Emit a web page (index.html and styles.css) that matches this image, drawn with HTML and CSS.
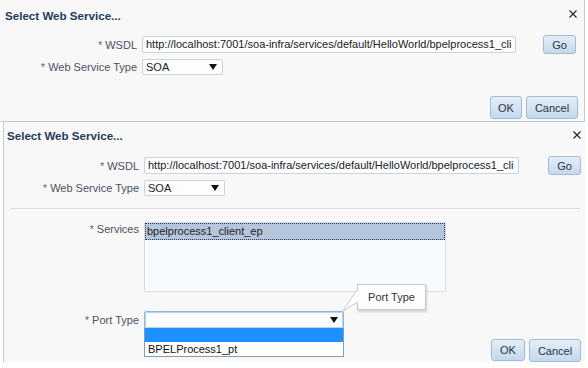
FILE: index.html
```html
<!DOCTYPE html>
<html>
<head>
<meta charset="utf-8">
<link rel="stylesheet" href="styles.css">
</head>
<body>
<div class="shot shot1">
  <div class="head"><span class="title">Select Web Service...</span><svg class="close" width="8" height="8" viewBox="0 0 8 8"><path d="M0.5 0.5L7.5 7.5M7.5 0.5L0.5 7.5" stroke="#222" stroke-width="1.1"/></svg></div>
  <div class="form">
    <div class="lbl"><span class="req">*</span> WSDL</div>
    <div class="input url">http://localhost:7001/soa-infra/services/default/HelloWorld/bpelprocess1_cli</div>
    <div class="btncell"><button class="btn go">Go</button></div>
    <div class="lbl"><span class="req">*</span> Web Service Type</div>
    <div class="select soa"><span>SOA</span><svg class="arrow" width="8" height="6" viewBox="0 0 8 6"><path d="M0 0H8L4 6Z" fill="#111"/></svg></div>
  </div>
  <div class="footer"><button class="btn ok">OK</button><button class="btn cancel">Cancel</button></div>
</div>
<div class="shot shot2">
  <div class="head"><span class="title">Select Web Service...</span><svg class="close" width="8" height="8" viewBox="0 0 8 8"><path d="M0.5 0.5L7.5 7.5M7.5 0.5L0.5 7.5" stroke="#222" stroke-width="1.1"/></svg></div>
  <div class="form">
    <div class="lbl"><span class="req">*</span> WSDL</div>
    <div class="input url">http://localhost:7001/soa-infra/services/default/HelloWorld/bpelprocess1_cli</div>
    <div class="btncell"><button class="btn go">Go</button></div>
    <div class="lbl"><span class="req">*</span> Web Service Type</div>
    <div class="select soa"><span>SOA</span><svg class="arrow" width="8" height="6" viewBox="0 0 8 6"><path d="M0 0H8L4 6Z" fill="#111"/></svg></div>
  </div>
  <div class="sep"></div>
  <div class="form form2">
    <div class="lbl top"><span class="req">*</span> Services</div>
    <div class="listbox"><div class="opt sel">bpelprocess1_client_ep</div></div>
    <div class="lbl"><span class="req">*</span> Port Type</div>
    <div class="porttype">
      <div class="select port focus"><span></span><svg class="arrow" width="8" height="6" viewBox="0 0 8 6"><path d="M0 0H8L4 6Z" fill="#111"/></svg></div>
      <div class="dropdown">
        <div class="ditem hi"></div>
        <div class="ditem">BPELProcess1_pt</div>
      </div>
      <div class="tip">
        <svg class="tip-ptr" width="16" height="22" viewBox="0 0 16 22"><path d="M14.5 0.5 L0.5 21.5 L15.5 12" fill="#fff" stroke="#c4c9cf"/><path d="M15.6 1 L15.6 12" stroke="#fff" stroke-width="1.4"/></svg>
        Port Type
      </div>
    </div>
  </div>
  <div class="footer"><button class="btn ok">OK</button><button class="btn cancel">Cancel</button></div>
</div>
</body>
</html>
```
FILE: styles.css
```css
html, body {
  margin: 0;
  padding: 0;
  background: #ffffff;
}
body {
  font-family: "Liberation Sans", Arial, sans-serif;
  font-size: 11px;
  color: #333;
  width: 588px;
  height: 368px;
  overflow: hidden;
}
.shot {
  background: #f8f8f8;
  display: flex;
  flex-direction: column;
  box-sizing: border-box;
}
.shot1 {
  width: 585px;
  height: 122px;
  border-right: 1px solid #c3ccd6;
  border-bottom: 1px solid #c3ccd6;
}
.shot2 {
  margin-left: 3px;
  width: 582px;
  height: 240px;
  border-left: 1px solid #c3ccd6;
  position: relative;
}
.head {
  height: 30px;
  display: flex;
  align-items: center;
  justify-content: space-between;
  padding: 0 7px 0 5px;
}
.head .close {
  margin-top: -2px;
}
.shot2 .head {
  height: 28px;
  padding: 0 4px 0 3px;
}
.title {
  font-weight: bold;
  font-size: 11.6px;
  color: #1f3c5a;
}
.close {
  display: block;
}
.form {
  display: grid;
  grid-template-columns: 137px 374px 1fr;
  column-gap: 5px;
  row-gap: 5px;
  margin-top: 5px;
  align-items: center;
}
.shot2 .form {
  grid-template-columns: 135px 375px 1fr;
  margin-top: 7px;
}
.lbl {
  text-align: right;
  color: #4a5262;
  white-space: nowrap;
}
.lbl.top {
  align-self: start;
  padding-top: 1px;
}
.req {
  color: #4c6e94;
}
.input, .select {
  height: 17px;
  box-sizing: border-box;
  border: 1px solid #c8d3de;
  border-radius: 2px;
  background: #fcfdfe;
  color: #222;
  padding: 0 3px;
  line-height: 15px;
  white-space: nowrap;
  overflow: hidden;
}
.select {
  display: flex;
  align-items: center;
  justify-content: space-between;
  padding: 0 4px 0 3px;
  height: 16px;
}
.soa {
  width: 81px;
}
.arrow {
  display: block;
  margin-right: 1px;
}
.btncell {
  display: flex;
  justify-content: flex-end;
  padding-right: 8px;
}
.shot2 .btncell {
  padding-right: 4px;
}
.btn {
  font-family: "Liberation Sans", Arial, sans-serif;
  font-size: 11px;
  color: #2b3440;
  border: 1px solid #9fbbd8;
  border-radius: 3px;
  background: linear-gradient(#e5eef8, #c4d8ee);
  padding: 0;
  margin: 0;
}
.go {
  width: 33px;
  height: 19px;
}
.footer {
  display: flex;
  justify-content: flex-end;
  gap: 4px;
  padding-right: 6px;
  margin-top: 21px;
}
.shot2 .footer {
  margin-top: 10px;
  padding-right: 4px;
}
.ok {
  width: 32px;
  height: 23px;
}
.cancel {
  width: 52px;
  height: 23px;
}
.shot2 .ok { width: 34px; height: 22px; }
.sep {
  height: 1px;
  background: #d9dee4;
  margin: 12px 5px 0 6px;
}
.form2 {
  grid-template-columns: 135px 1fr;
  row-gap: 19px;
}
.shot2 .form2 {
  grid-template-columns: 135px 1fr;
  margin-top: 13px;
}
.listbox {
  width: 302px;
  height: 70px;
  box-sizing: border-box;
  border: 1px solid #d3dbe4;
  border-radius: 2px;
  background: #f8fbfe;
}
.opt {
  height: 17px;
  line-height: 15px;
  padding-left: 1px;
  box-sizing: border-box;
  color: #222;
}
.opt.sel {
  background: #b5c6dc;
  border: 1px dotted #233a66;
}
.porttype {
  position: relative;
  width: 200px;
}
.select.port {
  width: 200px;
  height: 18px;
}
.select.focus {
  border-color: #8cb4e6;
  border-width: 1px;
  box-shadow: inset 0 0 0 1px #b9d3f2;
}
.dropdown {
  position: absolute;
  left: 0;
  top: 17px;
  width: 200px;
  box-sizing: border-box;
  border: 1px solid #7f9db9;
  border-top: none;
  background: #fff;
  z-index: 2;
}
.ditem {
  height: 14px;
  line-height: 14px;
  padding-left: 3px;
  color: #111;
}
.ditem.hi {
  background: #1e90ff;
}
.tip {
  position: absolute;
  left: 213px;
  top: -27px;
  width: 69px;
  height: 26px;
  box-sizing: border-box;
  background: #fff;
  border: 1px solid #c4c9cf;
  box-shadow: 1px 2px 2px rgba(0,0,0,0.15);
  color: #333;
  font-size: 11px;
  line-height: 24px;
  text-align: center;
  z-index: 3;
}
.tip-ptr {
  position: absolute;
  left: -16px;
  top: 5px;
}
```
